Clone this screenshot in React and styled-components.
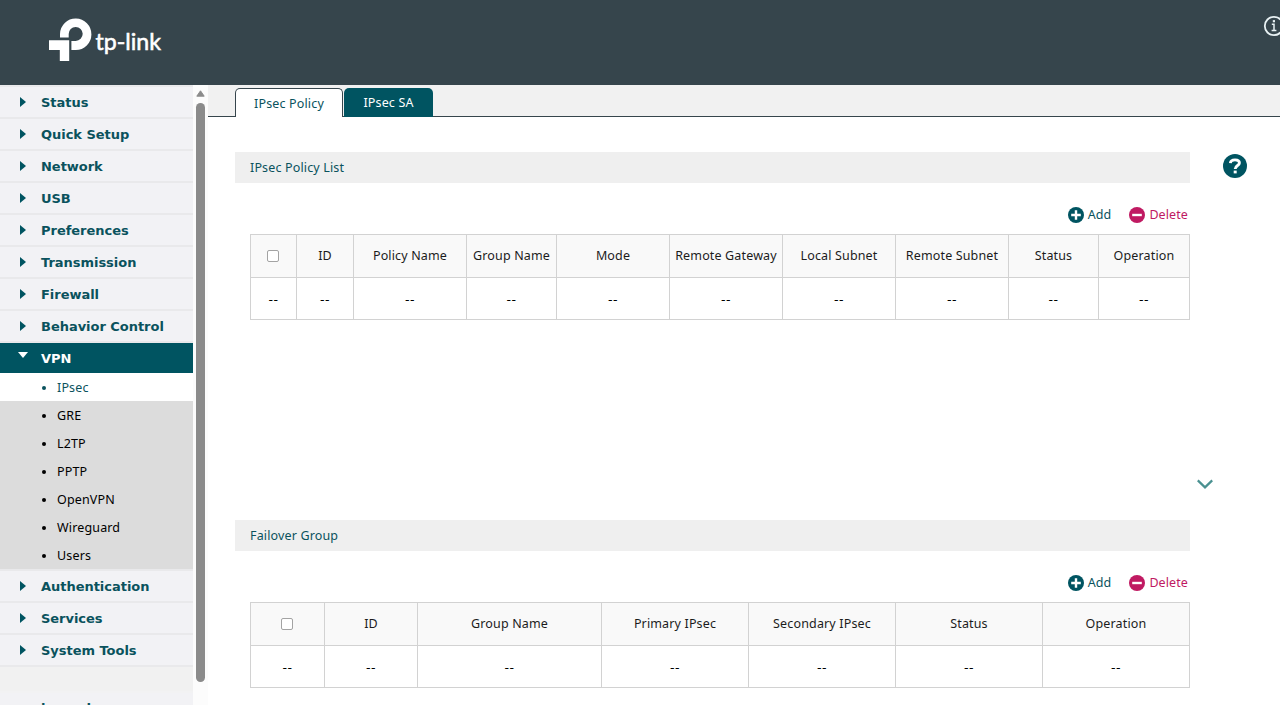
import React from 'react'
import styled, { createGlobalStyle } from 'styled-components'

const Global = createGlobalStyle`
  * { box-sizing: border-box; }
  body {
    margin: 0;
    background: #fff;
    font-family: 'Noto Sans', 'DejaVu Sans', sans-serif;
    font-size: 12.5px;
    line-height: 16px;
    letter-spacing: 0.15px;
    overflow: hidden;
  }
`

const Page = styled.div`
  height: 705px;
  display: flex;
  flex-direction: column;
  overflow: hidden;
`

const Header = styled.header`
  height: 85px;
  flex: none;
  background: #36454c;
  display: flex;
  justify-content: space-between;
  padding: 15px 0 0 48px;
  overflow: hidden;
`

const InfoButton = styled.a`
  width: 17px;
  height: 22px;
  overflow: hidden;
  svg { display: block; }
`

const Body = styled.div`
  display: flex;
  flex: 1;
  min-height: 0;
`

const Sidebar = styled.nav`
  width: 193px;
  background: #f1f1f1;
  overflow: hidden;
  flex: none;
`

const MenuItem = styled.div`
  height: 32px;
  display: flex;
  align-items: center;
  padding-left: ${p => (p.$bare ? 41 : 20)}px;
  border-top: 2px solid ${p => (p.$bare ? '#f2f2f3' : '#e9e9eb')};
  background: ${p => (p.$open ? '#005461' : '#f2f2f5')};
  color: ${p => (p.$open ? '#fff' : '#0a525d')};
  font: bold 13px/30px 'DejaVu Sans', sans-serif;
  letter-spacing: -0.03px;
`

const Label = styled.span`
  padding-top: 2px;
  line-height: 28px;
`

const MenuEnd = styled.div`
  height: 26px;
  border-top: 2px solid #e9e9eb;
`

const Arrow = styled.i`
  width: 0;
  height: 0;
  margin-right: 15px;
  border: 5px solid transparent;
  border-left: 6px solid #005461;
  border-right: 0;
  ${p => p.$open && `
    margin: 0 13px 7px -2px;
    border: 5px solid transparent;
    border-top: 6px solid #fff;
    border-bottom: 0;
  `}
`

const SubMenu = styled.ul`
  margin: 0;
  padding: 0;
  list-style: none;
  background: #dcdcdc;
`

const SubItem = styled.li`
  height: 28px;
  display: flex;
  align-items: center;
  padding: 2px 0 0 42px;
  background: ${p => (p.$active ? '#fff' : 'transparent')};
  color: ${p => (p.$active ? '#0a525d' : '#000')};
  &::before {
    content: '';
    width: 4px;
    height: 4px;
    margin-right: 11px;
    border-radius: 50%;
    background: currentColor;
  }
`

const Scrollbar = styled.div`
  width: 15px;
  flex: none;
  display: flex;
  flex-direction: column;
  align-items: center;
  padding-top: 5px;
  background: #fcfcfc;
`

const Thumb = styled.div`
  width: 9px;
  height: 579px;
  margin-top: 6px;
  border-radius: 5px;
  background: #8b8b8b;
`

const Main = styled.main`
  flex: 1;
  min-width: 0;
`

const Tabs = styled.div`
  height: 32px;
  display: flex;
  align-items: flex-end;
  gap: 1px;
  padding-left: 27px;
  background: #f1f1f1;
  box-shadow: inset 0 -1px #36454c;
`

const Tab = styled.div`
  width: ${p => p.$w}px;
  height: 29px;
  text-align: center;
  line-height: 29px;
  border-radius: 5px 5px 0 0;
  background: #005461;
  color: #fff;
  ${p => p.$active && `
    background: #fff;
    color: #0a525d;
    border: 1px solid #36454c;
    border-bottom: 0;
  `}
`

const Content = styled.div`
  display: flex;
  padding: 35px 0 0 27px;
`

const Panels = styled.div`
  width: 955px;
`

const Panel = styled.section`
  height: 368px;
`

const PanelTitle = styled.h2`
  height: 31px;
  margin: 0;
  padding-left: 15px;
  background: #efefef;
  color: #0a525d;
  font-size: inherit;
  font-weight: 400;
  line-height: 31px;
`

const Toolbar = styled.div`
  height: 51px;
  display: flex;
  justify-content: flex-end;
  align-items: center;
  gap: 18px;
  padding: 13px 2px 0 0;
`

const Action = styled.button`
  display: flex;
  align-items: center;
  gap: 4px;
  padding: 0;
  border: 0;
  background: none;
  font: inherit;
  letter-spacing: 0.1px;
  color: ${p => (p.$danger ? '#c01a62' : '#0a525d')};
`

const Table = styled.div`
  display: grid;
  grid-template-columns: ${p => p.$cols};
  grid-template-rows: 43px 42px;
  width: 940px;
  margin-left: 15px;
  border-top: 1px solid #d2d2d2;
  border-left: 1px solid #d2d2d2;
`

const Cell = styled.div`
  display: flex;
  align-items: center;
  justify-content: center;
  white-space: nowrap;
  border-right: 1px solid #d2d2d2;
  border-bottom: 1px solid #d2d2d2;
  background: ${p => (p.$head ? '#f9f9f9' : '#fff')};
  color: ${p => (p.$head ? '#1c1c1c' : '#000')};
  padding-top: ${p => (p.$head ? 0 : 3)}px;
`

const Dashes = styled.span`
  font-family: 'DejaVu Sans', sans-serif;
  letter-spacing: 0.5px;
`

const Checkbox = styled.span`
  width: 12px;
  height: 12px;
  margin-right: 1px;
  border: 1px solid #a3a3a3;
  border-radius: 2px;
  background: #fff;
`

const Aside = styled.aside`
  width: 90px;
  display: flex;
  flex-direction: column;
  padding: 2px 0 0 7px;
  gap: 301px;
  svg { display: block; }
`

const HelpButton = styled.a`
  margin-left: 26px;
`

const menuTop = ['Status', 'Quick Setup', 'Network', 'USB', 'Preferences', 'Transmission', 'Firewall', 'Behavior Control']
const vpnItems = ['IPsec', 'GRE', 'L2TP', 'PPTP', 'OpenVPN', 'Wireguard', 'Users']
const menuBottom = ['Authentication', 'Services', 'System Tools']

const policyCols = ['', 'ID', 'Policy Name', 'Group Name', 'Mode', 'Remote Gateway', 'Local Subnet', 'Remote Subnet', 'Status', 'Operation']
const failoverCols = ['', 'ID', 'Group Name', 'Primary IPsec', 'Secondary IPsec', 'Status', 'Operation']

function Logo() {
  return (
    <svg width="120" height="50" viewBox="48 15 120 50" fill="#fff">
      <path d="M60 37.5V34A15.7 15.7 0 1 1 75.7 50H71.4V40.9H75.7A7 7 0 1 0 68.7 34V37.5Z" />
      <path d="M49 40.3H69.2V61H59.8V50H49Z" />
      <text
        x="95.5"
        y="50"
        fontFamily="Lato, sans-serif"
        fontSize="23"
        letterSpacing="0"
        stroke="#fff"
        strokeWidth="0.55"
        textLength="65.5"
        lengthAdjust="spacingAndGlyphs"
      >
        tp-link
      </text>
    </svg>
  )
}

function RoundIcon({ color, plus }) {
  return (
    <svg width="16" height="16" viewBox="0 0 16 16">
      <circle cx="8" cy="8" r="8" fill={color} />
      <path d={plus ? 'M3.2 8H12.8M8 3.2V12.8' : 'M3.2 8H12.8'} stroke="#fff" strokeWidth="2.4" />
    </svg>
  )
}

function GridPanel({ title, heads, cols }) {
  return (
    <Panel>
      <PanelTitle>{title}</PanelTitle>
      <Toolbar>
        <Action><RoundIcon color="#005461" plus />Add</Action>
        <Action $danger><RoundIcon color="#c01a62" />Delete</Action>
      </Toolbar>
      <Table $cols={cols}>
        {heads.map((h, i) => (
          <Cell $head key={i}>{h || <Checkbox />}</Cell>
        ))}
        {heads.map((h, i) => (
          <Cell key={i}><Dashes>--</Dashes></Cell>
        ))}
      </Table>
    </Panel>
  )
}

export default function App() {
  return (
    <Page>
      <Global />
      <Header>
        <Logo />
        <InfoButton>
          <svg width="22" height="22" viewBox="0 0 22 22" fill="none" stroke="#e8f1f3">
            <circle cx="11" cy="11" r="9.2" strokeWidth="1.8" />
            <path d="M8.8 9.3H11V15.3M8.6 15.5H13.4" strokeWidth="1.5" />
            <path d="M9.8 6.2H12" strokeWidth="2.2" />
          </svg>
        </InfoButton>
      </Header>
      <Body>
        <Sidebar>
          {menuTop.map(t => (
            <MenuItem key={t}><Arrow /><Label>{t}</Label></MenuItem>
          ))}
          <MenuItem $open><Arrow $open /><Label>VPN</Label></MenuItem>
          <SubMenu>
            {vpnItems.map((t, i) => (
              <SubItem key={t} $active={i === 0}>{t}</SubItem>
            ))}
          </SubMenu>
          {menuBottom.map(t => (
            <MenuItem key={t}><Arrow /><Label>{t}</Label></MenuItem>
          ))}
          <MenuEnd />
          <MenuItem $bare><Label>logged</Label></MenuItem>
        </Sidebar>
        <Scrollbar>
          <svg width="9" height="7" viewBox="0 0 9 7">
            <path d="M4.5 0.8L8.2 6.2H0.8Z" fill="#8b8b8b" stroke="#8b8b8b" strokeLinejoin="round" />
          </svg>
          <Thumb />
        </Scrollbar>
        <Main>
          <Tabs>
            <Tab $active $w={108}>IPsec Policy</Tab>
            <Tab $w={89}>IPsec SA</Tab>
          </Tabs>
          <Content>
            <Panels>
              <GridPanel
                title="IPsec Policy List"
                heads={policyCols}
                cols="46px 57px 113px 90px 113px 113px 113px 113px 90px 91px"
              />
              <GridPanel
                title="Failover Group"
                heads={failoverCols}
                cols="74px 93px 184px 147px 147px 147px 147px"
              />
            </Panels>
            <Aside>
              <HelpButton>
                <svg width="24" height="24" viewBox="0 0 24 24" fill="none" stroke="#fff">
                  <circle cx="12" cy="12" r="12" fill="#005461" stroke="none" />
                  <path d="M7.4 9.2C7.6 6.8 9.4 5.9 12 5.9C14.7 5.9 16.4 7 16.4 9C16.4 11.6 12.2 11.4 12.2 15" strokeWidth="2.9" />
                  <path d="M10.7 18H13.7" strokeWidth="2.8" />
                </svg>
              </HelpButton>
              <svg width="16" height="11" viewBox="0 0 16 11" fill="none">
                <path d="M0.8 1.4L8 8.4L15.2 1.4" stroke="#4a9191" strokeWidth="2.2" />
              </svg>
            </Aside>
          </Content>
        </Main>
      </Body>
    </Page>
  )
}
